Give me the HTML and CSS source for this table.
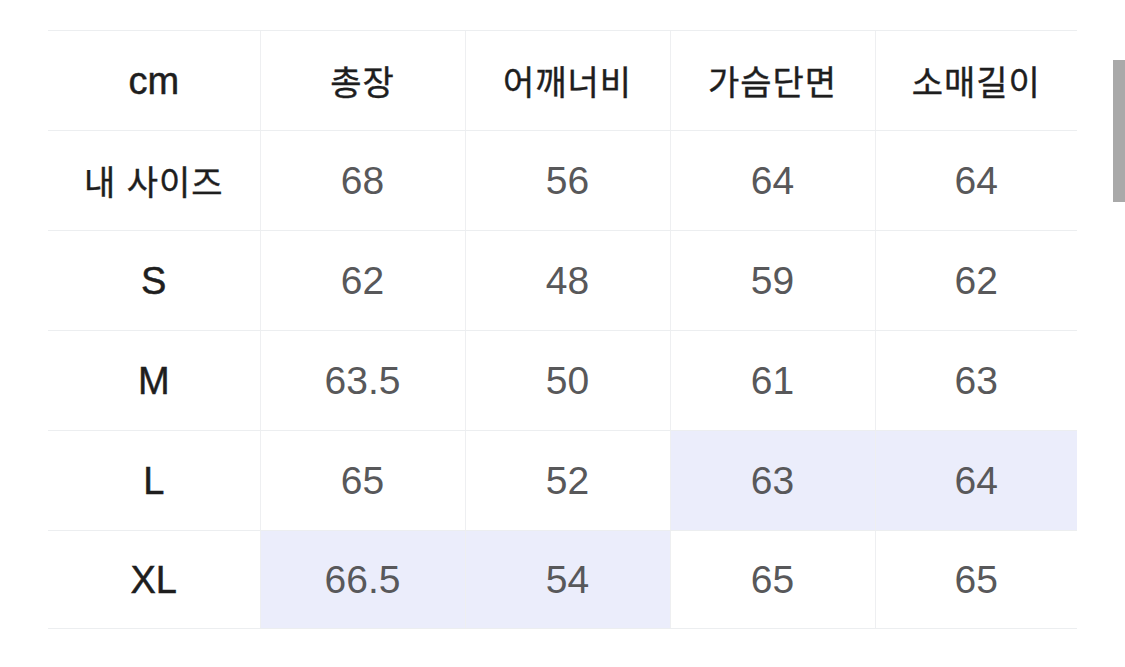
FILE: index.html
```html
<!DOCTYPE html>
<html lang="ko">
<head>
<meta charset="utf-8">
<link rel="stylesheet" href="styles.css">
</head>
<body>
<div class="page">
  <table class="size-table">
    <colgroup>
      <col class="c1"><col class="c2"><col class="c3"><col class="c4"><col class="c5">
    </colgroup>
    <thead>
      <tr><th class="latin">cm</th><th>총장</th><th>어깨너비</th><th>가슴단면</th><th>소매길이</th></tr>
    </thead>
    <tbody>
      <tr><th>내 사이즈</th><td>68</td><td>56</td><td>64</td><td>64</td></tr>
      <tr><th class="latin">S</th><td>62</td><td>48</td><td>59</td><td>62</td></tr>
      <tr><th class="latin">M</th><td>63.5</td><td>50</td><td>61</td><td>63</td></tr>
      <tr><th class="latin">L</th><td>65</td><td>52</td><td class="hl">63</td><td class="hl">64</td></tr>
      <tr class="last"><th class="latin">XL</th><td class="hl">66.5</td><td class="hl">54</td><td>65</td><td>65</td></tr>
    </tbody>
  </table>
  <div class="scrollbar"></div>
</div>
</body>
</html>
```

FILE: styles.css
```css
html, body {
  margin: 0;
  padding: 0;
  background: #ffffff;
}
.page {
  position: relative;
  width: 1125px;
  height: 667px;
  padding: 30px 0 0 48px;
  box-sizing: border-box;
  font-family: "Liberation Sans", "Noto Sans CJK KR", sans-serif;
}
.size-table {
  border-collapse: collapse;
  width: 1029px;
  table-layout: fixed;
}
.c1 { width: 212px; }
.c2 { width: 205px; }
.c3 { width: 205px; }
.c4 { width: 205px; }
.c5 { width: 202px; }
.size-table th,
.size-table td {
  height: 99px;
  padding: 0;
  text-align: center;
  vertical-align: middle;
  border-top: 1px solid #eceef0;
  border-bottom: 1px solid #eceef0;
  border-left: 1px solid #eeeff1;
  line-height: 1;
}
.size-table tr > :first-child {
  border-left: none;
}
.size-table th {
  font-family: "Noto Sans CJK KR", "Liberation Sans", sans-serif;
  font-weight: 400;
  font-size: 34px;
  letter-spacing: 1px;
  color: #1e1e1e;
  -webkit-text-stroke: 0.4px #1e1e1e;
}
.size-table th.latin {
  font-family: "Liberation Sans", "Noto Sans CJK KR", sans-serif;
  font-size: 38px;
  letter-spacing: 0;
  -webkit-text-stroke: 0.5px #1e1e1e;
}
.size-table td {
  font-size: 39px;
  color: #58585a;
}
.size-table td.hl {
  background: #ebedfb;
}
.size-table tr.last th,
.size-table tr.last td {
  height: 97px;
}
.scrollbar {
  position: absolute;
  left: 1113px;
  top: 60px;
  width: 12px;
  height: 142px;
  background: #a9a9a9;
}
```
